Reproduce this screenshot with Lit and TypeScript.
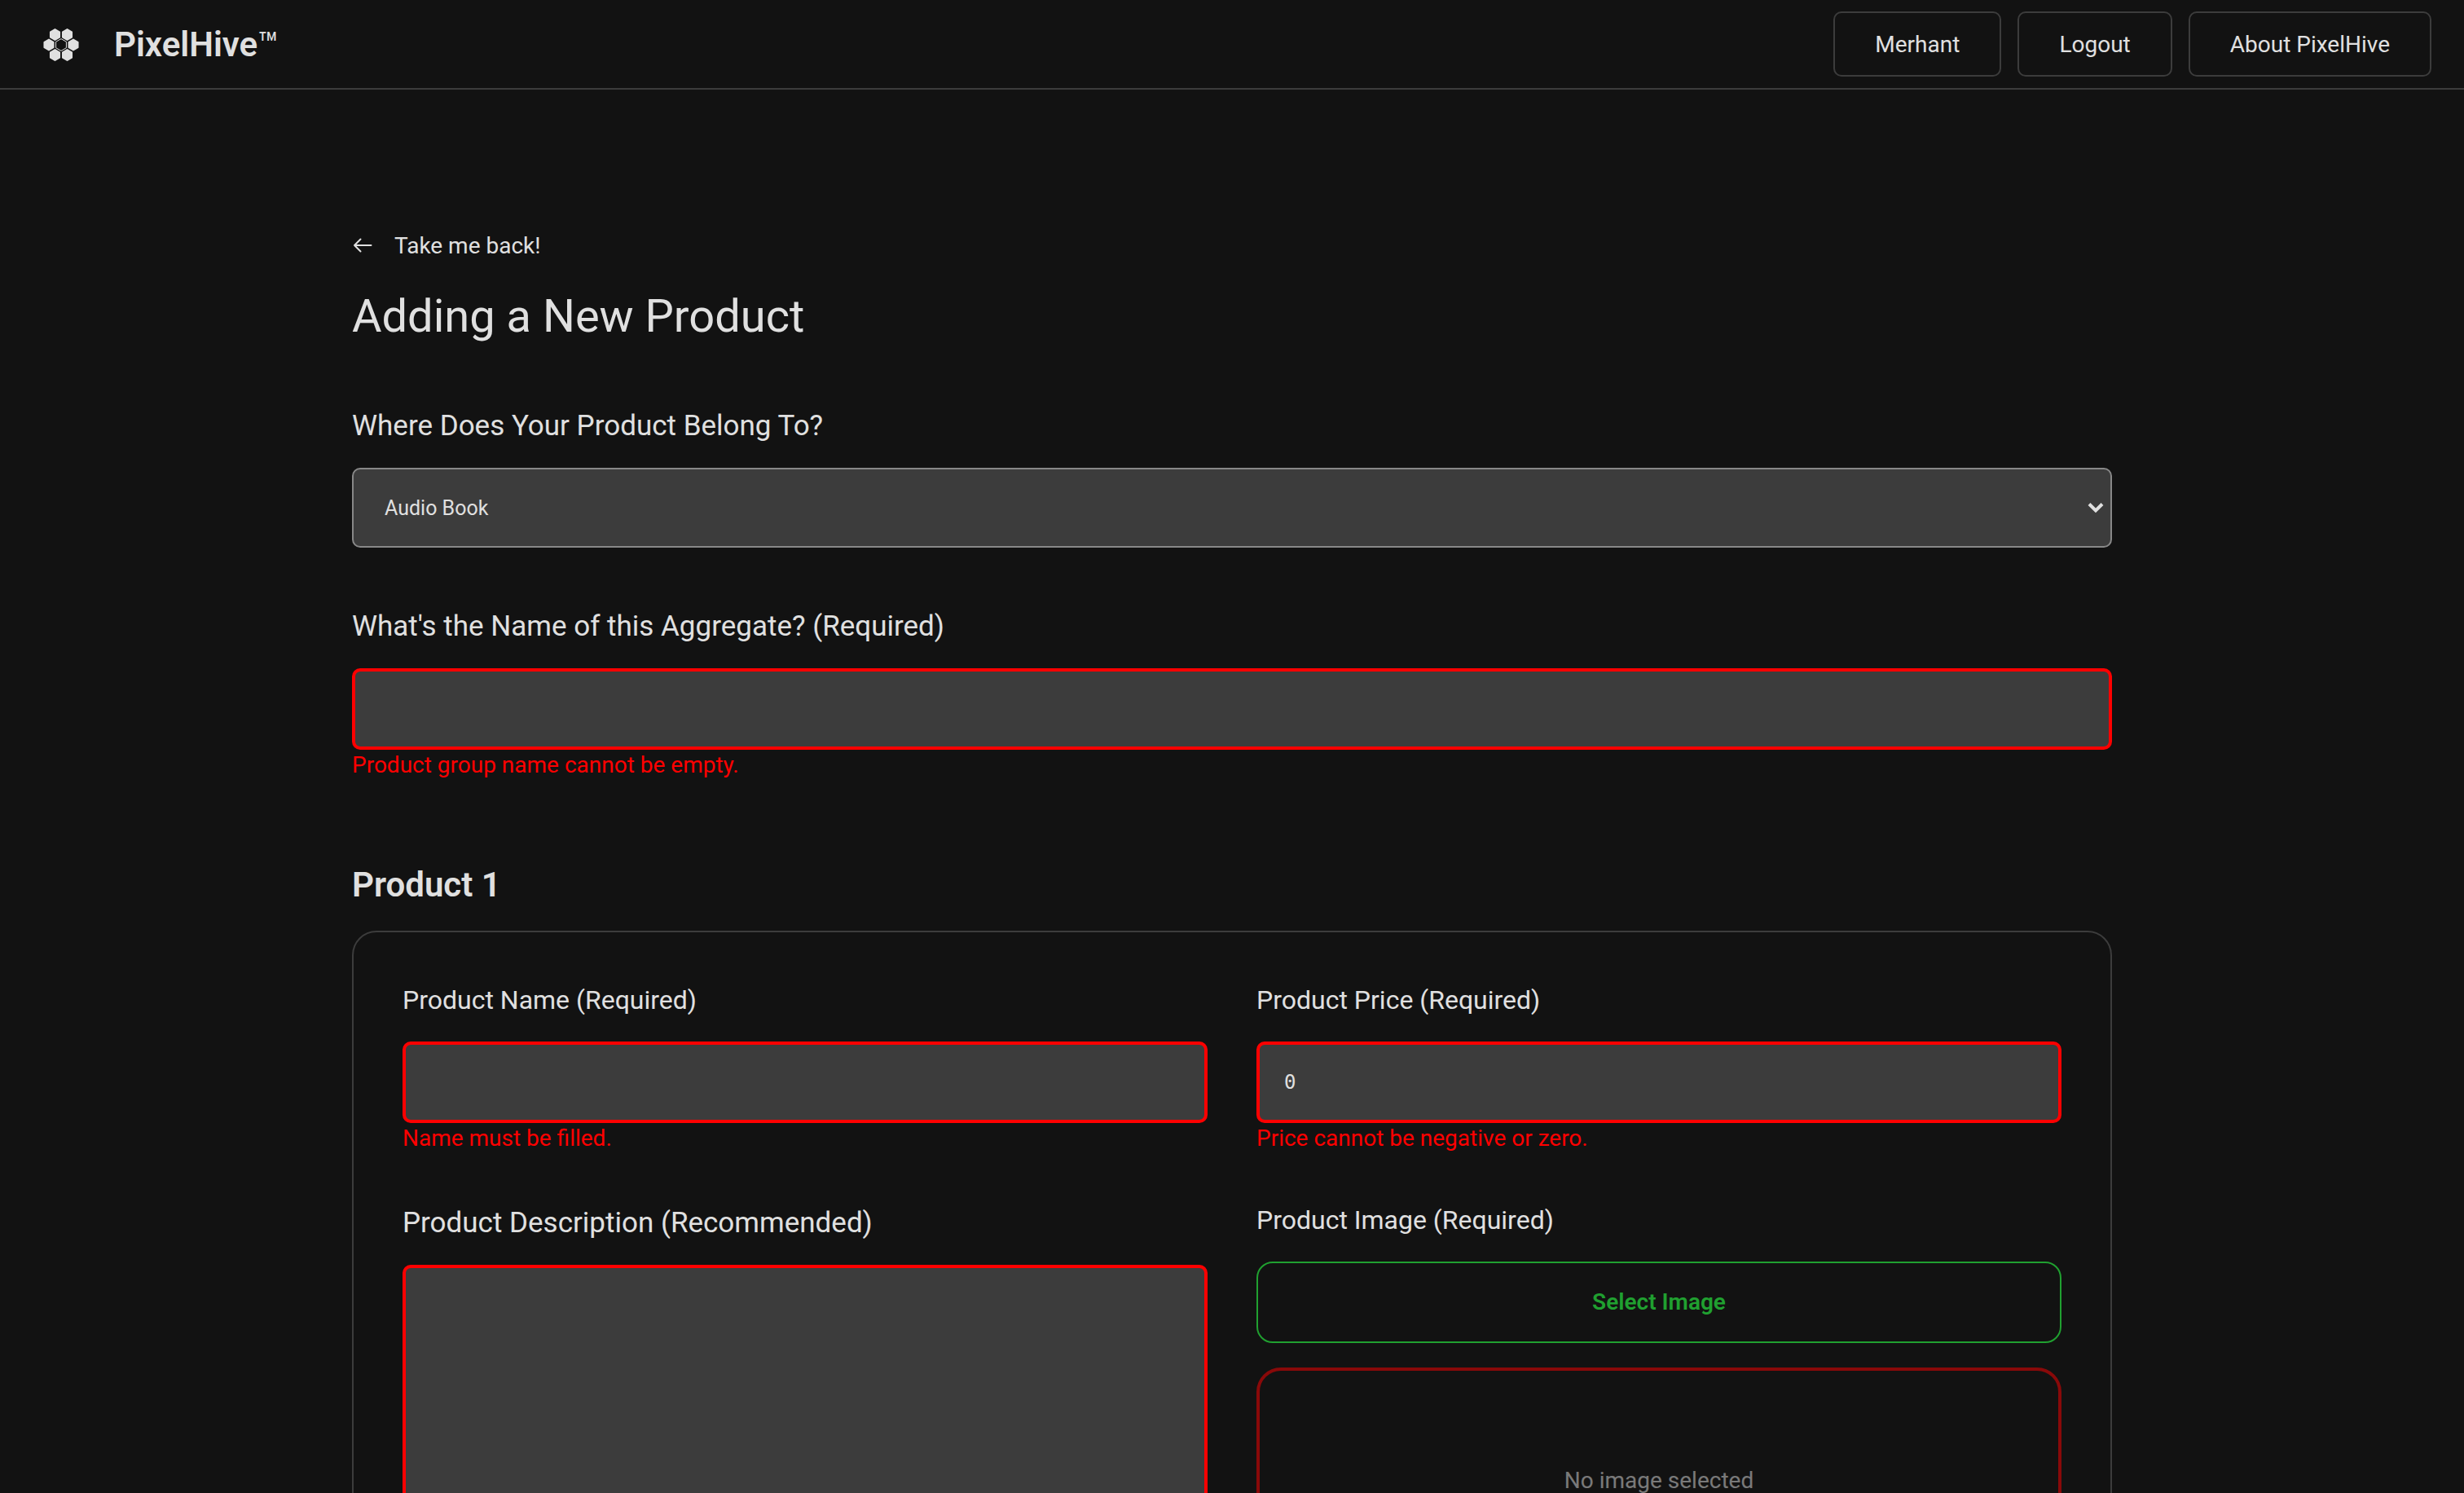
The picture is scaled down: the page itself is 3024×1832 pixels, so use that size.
import { LitElement, html, css, svg } from "lit";
import { customElement, state } from "lit/decorators.js";

const hexagon = (cx: number, cy: number, r: number) => {
  const w = r * 0.866;
  return [
    [cx, cy - r],
    [cx + w, cy - r / 2],
    [cx + w, cy + r / 2],
    [cx, cy + r],
    [cx - w, cy + r / 2],
    [cx - w, cy - r / 2],
  ]
    .map((p) => p.join(","))
    .join(" ");
};

const petals = [
  [14.5, 7.5],
  [29.5, 7.5],
  [7, 20],
  [37, 20],
  [14.5, 32.5],
  [29.5, 32.5],
];

const theme = css`
  :host {
    --bg: #121212;
    --text: #e0e0e0;
    --line: #3c3c3c;
    --field: #3c3c3c;
    --error: #ff0000;
    --accent: #20a030;
    font-family: Roboto, "Liberation Sans", sans-serif;
    font-weight: 400;
    font-size: 28px;
    line-height: 36px;
    color: var(--text);
  }
  * {
    box-sizing: border-box;
  }
`;

@customElement("site-header")
class SiteHeader extends LitElement {
  static styles = [
    theme,
    css`
      :host {
        display: block;
      }
      .bar {
        display: flex;
        align-items: center;
        justify-content: space-between;
        padding: 14px 40px 14px 53px;
        border-bottom: 2px solid var(--line);
      }
      .brand {
        display: flex;
        align-items: center;
        gap: 43px;
        padding-top: 2px;
        color: inherit;
        text-decoration: none;
        font-size: 42px;
        font-weight: 600;
        line-height: 56px;
      }
      .logo {
        width: 44px;
        height: 40px;
      }
      .petal {
        fill: var(--text);
        stroke: var(--text);
        stroke-width: 2;
        stroke-linejoin: round;
      }
      .core {
        fill: none;
        stroke: var(--text);
        stroke-width: 1;
      }
      .mark {
        font-weight: 400;
      }
      .actions {
        display: flex;
        gap: 20px;
      }
      .action {
        padding: 21px 49px 19px;
        border: 2px solid var(--line);
        border-radius: 10px;
        color: inherit;
        text-decoration: none;
        background: none;
        font: inherit;
        cursor: pointer;
      }
    `,
  ];

  render() {
    return html`
      <header class="bar">
        <a class="brand" href="#home">
          <svg class="logo" viewBox="0 0 44 40" aria-hidden="true">
            ${petals.map(([x, y]) => svg`<polygon class="petal" points=${hexagon(x, y, 6.4)} />`)}
            <polygon class="core" points=${hexagon(22, 20, 7.4)} />
          </svg>
          <span>PixelHive<span class="mark">™</span></span>
        </a>
        <nav class="actions">
          <a class="action" href="#merchant">Merhant</a>
          <button class="action" type="button">Logout</button>
          <a class="action" href="#about">About PixelHive</a>
        </nav>
      </header>
    `;
  }
}

@customElement("app-root")
class AppRoot extends LitElement {
  static styles = [
    theme,
    css`
      :host {
        display: block;
        height: 100vh;
        overflow-y: auto;
        scrollbar-width: none;
        background: var(--bg);
      }
      .page {
        max-width: 2160px;
        margin: 0 auto;
        padding: 174px 0 120px;
      }
      .back {
        display: flex;
        align-items: center;
        gap: 26px;
        width: fit-content;
        color: inherit;
        text-decoration: none;
      }
      .arrow {
        width: 26px;
        height: 26px;
        fill: none;
        stroke: currentColor;
        stroke-width: 2;
        stroke-linecap: round;
        stroke-linejoin: round;
      }
      .title {
        margin: 30px 0 0;
        font-size: 56px;
        font-weight: 400;
        line-height: 76px;
      }
      .form {
        display: flex;
        flex-direction: column;
      }
      .field {
        display: flex;
        flex-direction: column;
      }
      .form > .field {
        margin-top: 72px;
      }
      .label {
        margin-bottom: 30px;
        font-size: 32px;
        line-height: 42px;
      }
      .large {
        margin-bottom: 26px;
        font-size: 35px;
        line-height: 50px;
      }
      .control {
        width: 100%;
        height: 100px;
        margin: 0;
        padding: 0 30px;
        border: 4px solid var(--error);
        border-radius: 10px;
        outline: none;
        background: var(--field);
        color: inherit;
        font: 24px "DejaVu Sans Mono", monospace;
        appearance: none;
      }
      .picker {
        position: relative;
      }
      .select {
        display: block;
        height: 98px;
        padding: 0 38px;
        border: 2px solid #888888;
        font-family: inherit;
        font-size: 25px;
      }
      .chevron {
        position: absolute;
        right: 10px;
        top: 42px;
        width: 20px;
        height: 14px;
        fill: none;
        stroke: currentColor;
        stroke-width: 4;
        pointer-events: none;
      }
      .area {
        height: 400px;
        padding: 30px;
        resize: none;
      }
      .error {
        margin: 0;
        color: var(--error);
        line-height: 38px;
      }
      .section {
        margin: 100px 0 28px;
        font-size: 42px;
        font-weight: 600;
        line-height: 56px;
      }
      .card {
        display: grid;
        grid-template-columns: 1fr 1fr;
        gap: 60px;
        align-items: start;
        padding: 62px 60px;
        border: 2px solid var(--line);
        border-radius: 30px;
      }
      .upload {
        height: 100px;
        border: 2px solid var(--accent);
        border-radius: 20px;
        background: none;
        color: var(--accent);
        font: inherit;
        font-weight: 600;
        cursor: pointer;
      }
      .preview {
        display: flex;
        align-items: center;
        justify-content: center;
        height: 278px;
        margin-top: 30px;
        border: 4px solid var(--error);
        border-radius: 30px;
        opacity: 0.5;
      }
    `,
  ];

  @state() private groupName = "";
  @state() private productName = "";
  @state() private price = "0";

  render() {
    return html`
      <site-header></site-header>
      <main class="page">
        <a class="back" href="#back">
          <svg class="arrow" viewBox="0 0 26 26" aria-hidden="true">
            <path d="M23.5 12H3M10.5 4.5L3 12L10.5 19.5" />
          </svg>
          <span>Take me back!</span>
        </a>
        <h1 class="title">Adding a New Product</h1>
        <form class="form">
          <div class="field">
            <label class="label large" for="category">Where Does Your Product Belong To?</label>
            <div class="picker">
              <select class="control select" id="category">
                <option>Audio Book</option>
              </select>
              <svg class="chevron" viewBox="0 0 20 14" aria-hidden="true">
                <path d="M2 2.5L10 10.5L18 2.5" />
              </svg>
            </div>
          </div>
          <div class="field">
            <label class="label large" for="group">What's the Name of this Aggregate? (Required)</label>
            <input class="control" id="group" type="text" .value=${this.groupName} />
            <p class="error">Product group name cannot be empty.</p>
          </div>
          <h2 class="section">Product 1</h2>
          <section class="card">
            <div class="field">
              <label class="label" for="name">Product Name (Required)</label>
              <input class="control" id="name" type="text" .value=${this.productName} />
              <p class="error">Name must be filled.</p>
            </div>
            <div class="field">
              <label class="label" for="price">Product Price (Required)</label>
              <input class="control" id="price" type="text" inputmode="decimal" .value=${this.price} />
              <p class="error">Price cannot be negative or zero.</p>
            </div>
            <div class="field">
              <label class="label large" for="description">Product Description (Recommended)</label>
              <textarea class="control area" id="description"></textarea>
            </div>
            <div class="field">
              <label class="label" for="image">Product Image (Required)</label>
              <button class="upload" id="image" type="button">Select Image</button>
              <div class="preview">No image selected</div>
            </div>
          </section>
        </form>
      </main>
    `;
  }
}
